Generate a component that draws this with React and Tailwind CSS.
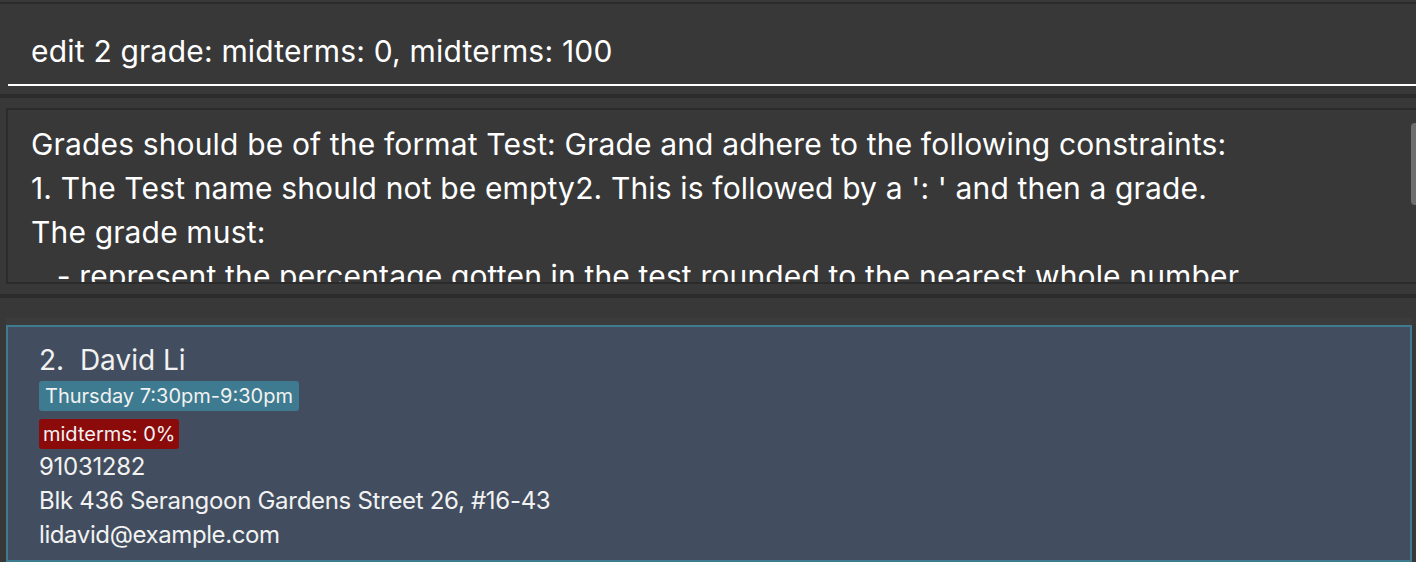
import React from "react";

const resultLines = [
  "Grades should be of the format Test: Grade and adhere to the following constraints:",
  "1. The Test name should not be empty2. This is followed by a ': ' and then a grade.",
  "The grade must:",
  "   - represent the percentage gotten in the test rounded to the nearest whole number",
];

const App = () => {
  return (
    <div
      className="w-[1416px] h-[562px] overflow-hidden bg-[#383838] text-white flex flex-col"
      style={{ fontFamily: "Inter, 'Noto Sans', sans-serif" }}
    >
      {/* Command box */}
      <div className="pt-[2px] shrink-0">
        <div className="border-t-2 border-[#2b2b2b] h-[92px] pl-[8px]">
          <div className="h-[82px] border-b-2 border-white flex items-center pl-[23px] pt-[14px]">
            <span className="text-[30px] tracking-[0.2px]">edit 2 grade: midterms: 0, midterms: 100</span>
          </div>
        </div>
      </div>

      {/* Result display */}
      <div className="border-t-4 border-[#2b2b2b] h-[200px] pt-[10px] pl-[6px] shrink-0">
        <div className="relative h-[176px] border-2 border-r-0 border-[#2b2b2b] overflow-hidden pl-[23px] pt-[12px]">
          {resultLines.map((line, i) => (
            <div key={i} className="text-[30px] leading-[44px] tracking-[0.15px] whitespace-pre">
              {line}
            </div>
          ))}
          <div className="absolute right-0 top-[13px] w-[5px] h-[82px] rounded-tl-[4px] rounded-bl-[4px] bg-[#6e6e6e]" />
        </div>
      </div>

      {/* Person list */}
      <div className="border-t-4 border-[#2b2b2b] pt-[20px] flex-1 min-h-0">
        <div className="ml-[6px] mr-[4px] h-full bg-[#3c3c3c] pt-[7px]">
          <div className="h-full bg-[#424e5f] border-2 border-[#3e7b91] pl-[31px] pt-[18px] text-[#f2f2f2]">
            <div className="text-[28px] leading-[30px]">
              2.&nbsp;&nbsp;David Li
            </div>
            <div className="mt-[6px] flex">
              <span className="bg-[#3e7b91] rounded-[3px] px-[6px] h-[30px] flex items-center text-[20px]">
                Thursday 7:30pm-9:30pm
              </span>
            </div>
            <div className="mt-[8px] flex">
              <span className="bg-[#8b0a0a] rounded-[3px] px-[4px] h-[30px] flex items-center text-[20px]">
                midterms: 0%
              </span>
            </div>
            <div className="text-[24px] leading-[34px] tracking-[-0.3px] mt-[1px]">91031282</div>
            <div className="text-[24px] leading-[34px] tracking-[-0.3px]">
              Blk 436 Serangoon Gardens Street 26, #16-43
            </div>
            <div className="text-[24px] leading-[34px] tracking-[-0.4px]">lidavid@example.com</div>
          </div>
        </div>
      </div>
    </div>
  );
};

export default App;
